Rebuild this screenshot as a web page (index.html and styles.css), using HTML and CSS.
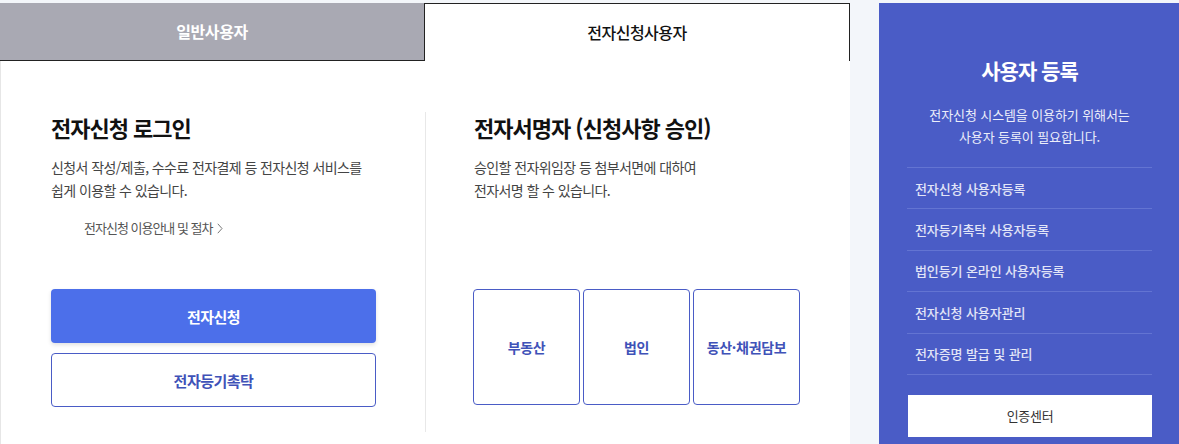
FILE: index.html
```html
<!DOCTYPE html>
<html lang="ko">
<head>
<meta charset="utf-8">
<title>전자신청</title>
<link rel="stylesheet" href="styles.css">
</head>
<body>
<div class="page">
  <main class="main">
    <div class="tabs">
      <div class="tab tab-off">일반사용자</div>
      <div class="tab tab-on">전자신청사용자</div>
    </div>
    <div class="content">
      <section class="sec sec-login">
        <h2 class="sec-title">전자신청 로그인</h2>
        <p class="sec-desc">신청서 작성/제출, 수수료 전자결제 등 전자신청 서비스를<br>쉽게 이용할 수 있습니다.</p>
        <a class="guide" href="#">전자신청 이용안내 및 절차<svg class="chev" width="6" height="11" viewBox="0 0 6 11"><path d="M0.8 0.8 L5 5.5 L0.8 10.2" fill="none" stroke="#777" stroke-width="1"/></svg></a>
        <div class="btns">
          <a class="btn btn-primary" href="#">전자신청</a>
          <a class="btn btn-outline" href="#">전자등기촉탁</a>
        </div>
      </section>
      <section class="sec sec-sign">
        <h2 class="sec-title">전자서명자 (신청사항 승인)</h2>
        <p class="sec-desc">승인할 전자위임장 등 첨부서면에 대하여<br>전자서명 할 수 있습니다.</p>
        <div class="boxes">
          <a class="box" href="#">부동산</a>
          <a class="box" href="#">법인</a>
          <a class="box" href="#">동산·채권담보</a>
        </div>
      </section>
    </div>
  </main>
  <aside class="reg">
    <h2 class="reg-title">사용자 등록</h2>
    <p class="reg-desc">전자신청 시스템을 이용하기 위해서는<br>사용자 등록이 필요합니다.</p>
    <ul class="reg-list">
      <li class="reg-item">전자신청 사용자등록</li>
      <li class="reg-item">전자등기촉탁 사용자등록</li>
      <li class="reg-item">법인등기 온라인 사용자등록</li>
      <li class="reg-item">전자신청 사용자관리</li>
      <li class="reg-item">전자증명 발급 및 관리</li>
    </ul>
    <a class="reg-btn" href="#">인증센터</a>
  </aside>
</div>
</body>
</html>
```

FILE: styles.css
```css
* { box-sizing: border-box; }
html, body { margin: 0; padding: 0; }
body {
  background: #f3f6fa;
  font-family: "Noto Sans CJK KR", "Noto Sans", sans-serif;
  overflow: hidden;
  height: 444px;
}
a { text-decoration: none; }
.page {
  display: flex;
  padding-top: 3px;
  height: 444px;
}
.main {
  width: 850px;
  flex: none;
  display: flex;
  flex-direction: column;
}
.tabs {
  display: flex;
  height: 58px;
}
.tab {
  display: flex;
  align-items: center;
  justify-content: center;
  padding-bottom: 1px;
  font-size: 16px;
}
.tab-off {
  width: 425px;
  background: #a9a9b3;
  color: #fff;
  font-weight: 700;
  letter-spacing: -0.4px;
  border-right: 1px solid #222;
  border-bottom: 1px solid #222;
}
.tab-on {
  flex: 1;
  background: #fff;
  color: #111;
  font-weight: 500;
  letter-spacing: -0.5px;
  border-top: 1px solid #222;
  border-right: 1px solid #222;
}
.content {
  flex: 1;
  background: #fff;
  border-left: 1px solid #e6e6e6;
  display: flex;
  padding-top: 51px;
}
.sec {
  height: 320px;
  display: flex;
  flex-direction: column;
  padding-bottom: 25px;
}
.sec-login {
  width: 424px;
  padding-left: 50px;
}
.sec-sign {
  flex: 1;
  border-left: 1px solid #e8e8e8;
  padding-left: 47px;
  padding-bottom: 27px;
}
.sec-title {
  margin: 0;
  font-size: 22px;
  line-height: 30px;
  font-weight: 700;
  color: #111;
  letter-spacing: -1px;
}
.sec-sign .sec-title { padding-left: 1px; }
.sec-desc {
  margin: 14px 0 0;
  font-size: 14px;
  line-height: 23px;
  color: #444;
  letter-spacing: -0.6px;
}
.sec-sign .sec-desc { padding-left: 1px; }
.guide {
  margin: 16px 0 0 33px;
  font-size: 13px;
  line-height: 20px;
  color: #555;
  letter-spacing: -1px;
  display: flex;
  align-items: center;
  gap: 5px;
}
.chev { display: block; }
.btns {
  margin-top: auto;
  width: 325px;
  display: flex;
  flex-direction: column;
  gap: 10px;
}
.btn {
  height: 54px;
  border-radius: 4px;
  display: flex;
  align-items: center;
  justify-content: center;
  font-size: 15px;
  font-weight: 700;
  letter-spacing: -0.5px;
}
.btn-primary {
  background: #4c6fea;
  color: #fff;
  box-shadow: 0 2px 4px rgba(0, 0, 0, 0.12);
}
.btn-outline {
  background: #fff;
  color: #3f52b8;
  border: 1px solid #4a5cc6;
}
.boxes {
  margin-top: auto;
  display: flex;
  gap: 3px;
}
.box {
  width: 107px;
  height: 116px;
  border: 1px solid #4a5cc6;
  border-radius: 4px;
  display: flex;
  align-items: center;
  justify-content: center;
  font-size: 14px;
  font-weight: 700;
  color: #3f52b8;
  letter-spacing: -0.3px;
}
.reg {
  margin-left: 29px;
  width: 300px;
  flex: none;
  background: #4a5cc6;
  padding: 52px 27px 0 28px;
  display: flex;
  flex-direction: column;
}
.reg-title {
  margin: 0;
  text-align: center;
  font-size: 21px;
  line-height: 30px;
  font-weight: 700;
  color: #fff;
  letter-spacing: -1px;
}
.reg-desc {
  margin: 19px 0 0;
  text-align: center;
  font-size: 13px;
  line-height: 22px;
  color: #eceefa;
  letter-spacing: -0.1px;
}
.reg-list {
  list-style: none;
  margin: 19px 0 0;
  padding: 0;
  border-top: 1px solid #6374d2;
}
.reg-item {
  height: 41.4px;
  border-bottom: 1px solid #6374d2;
  display: flex;
  align-items: center;
  padding-left: 8px;
  font-size: 13px;
  font-weight: 500;
  color: #e2e5f7;
  letter-spacing: -0.1px;
}
.reg-btn {
  margin-top: 20px;
  margin-left: 1px;
  height: 42px;
  background: #fff;
  color: #333;
  display: flex;
  align-items: center;
  justify-content: center;
  font-size: 13px;
  letter-spacing: -0.3px;
}
```
